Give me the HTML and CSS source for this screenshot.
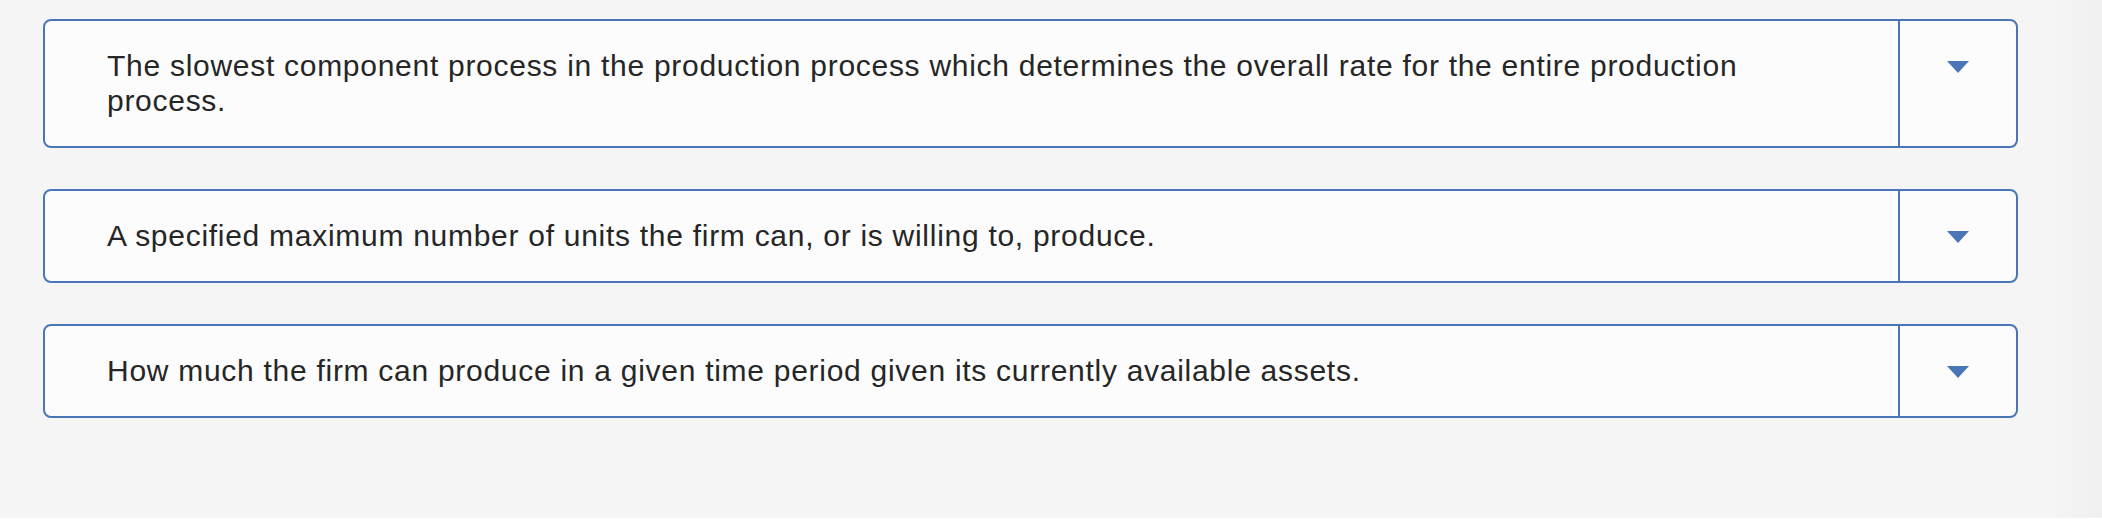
FILE: index.html
```html
<!DOCTYPE html>
<html lang="en">
<head>
    <meta charset="UTF-8">
    <meta name="viewport" content="width=device-width, initial-scale=1.0">
    <title>Matching</title>
    <link rel="stylesheet" href="styles.css">
</head>
<body>
    <div class="page">
        <div class="choices">
            <div class="choice">
                <div class="choice-text">The slowest component process in the production process which determines the overall rate for the entire production process.</div>
                <div class="choice-drop"><span class="caret"></span></div>
            </div>
            <div class="choice">
                <div class="choice-text">A specified maximum number of units the firm can, or is willing to, produce.</div>
                <div class="choice-drop"><span class="caret"></span></div>
            </div>
            <div class="choice">
                <div class="choice-text">How much the firm can produce in a given time period given its currently available assets.</div>
                <div class="choice-drop"><span class="caret"></span></div>
            </div>
        </div>
    </div>
</body>
</html>
```

FILE: styles.css
```css
body {
    margin: 0;
    background: white;
    font-family: "Liberation Sans", Arial, sans-serif;
    color: #262626;
}
.page {
    height: 518px;
    box-sizing: border-box;
    padding: 19px 0 0 43px;
    background: linear-gradient(to right, #f5f5f5 0, #f5f5f5 2050px, #f0f0f0 2102px);
}
.choices {
    width: 1975px;
    display: flex;
    flex-direction: column;
    gap: 41px;
}
.choice {
    display: flex;
    border: 2px solid #4a76b8;
    border-radius: 8px;
    background: #fcfcfc;
}
.choice-text {
    flex: 1;
    padding: 27px 50px 28px 62px;
    font-size: 30px;
    letter-spacing: 0.72px;
    line-height: 35px;
}
.choice-drop {
    width: 118px;
    box-sizing: border-box;
    border-left: 2px solid #4a76b8;
    display: flex;
    justify-content: center;
    align-items: flex-start;
    padding-top: 40px;
}
.caret {
    width: 0;
    height: 0;
    border-left: 11px solid transparent;
    border-right: 11px solid transparent;
    border-top: 12px solid #4a76b8;
}
```
